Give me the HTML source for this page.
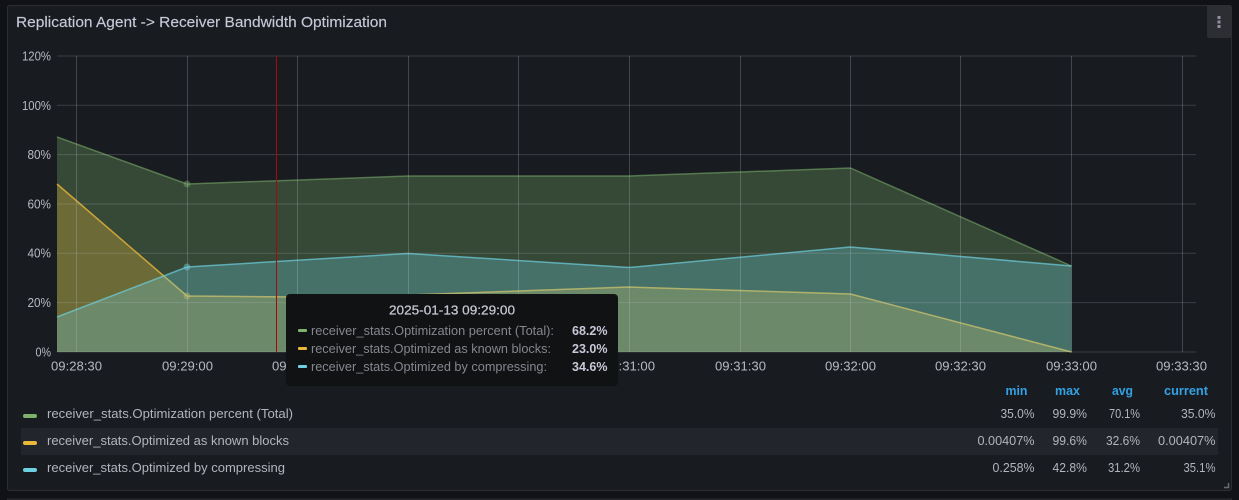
<!DOCTYPE html>
<html lang="en">
<head>
<meta charset="utf-8">
<title>Replication Agent -> Receiver Bandwidth Optimization</title>
<style>
html,body{margin:0;padding:0;width:1239px;height:500px;overflow:hidden;background:#111217}
svg{display:block;font-family:"Liberation Sans",sans-serif}
text{white-space:pre}
.ax{font-size:13px;fill:#b9b9c6}
.lg{font-size:13px;fill:#b4b4c1}
.hd{font-size:12.5px;fill:#33a2e5;font-weight:700}
.tt{font-size:13px;fill:#85878f}
.tv{font-size:12.5px;fill:#c8c8d8;font-weight:700}
</style>
</head>
<body>
<svg width="1239" height="500" viewBox="0 0 1239 500" xmlns="http://www.w3.org/2000/svg">
<rect x="7.5" y="5.5" width="1224" height="485" rx="2" fill="#181b1f" stroke="#2b2d32"/>
<rect x="7.5" y="499" width="1224" height="5" fill="#181b1f" stroke="#2b2d32"/>
<text x="16" y="27" font-size="15" fill="#c6c8d8" textLength="371" lengthAdjust="spacingAndGlyphs" stroke="#c6c8d8" stroke-width=".15">Replication Agent -&gt; Receiver Bandwidth Optimization</text>
<rect x="1207" y="5" width="24.500" height="33" rx="2" fill="#2c2e33"/>
<rect x="1217.500" y="16" width="3" height="3" fill="#8f909c"/>
<rect x="1217.500" y="20.500" width="3" height="3" fill="#8f909c"/>
<rect x="1217.500" y="25" width="3" height="3" fill="#8f909c"/>

<polygon points="57,137 187,184 408,176 629,176 850.500,168 1071.500,266 1071.500,352 57,352" fill="#7eb26d" fill-opacity=".3"/>
<polyline points="57,137 187,184 408,176 629,176 850.500,168 1071.500,266" fill="none" stroke="#7eb26d" stroke-opacity=".55" stroke-width="1.500" stroke-linejoin="round"/>
<circle cx="187" cy="184" r="3.500" fill="#7eb26d" fill-opacity=".4"/>
<polygon points="57,184 187,296 297,297 408,295 629,287 850.500,294 1071.500,352 57,352" fill="#eab839" fill-opacity=".3"/>
<polyline points="57,184 187,296 297,297 408,295 629,287 850.500,294 1071.500,352" fill="none" stroke="#eab839" stroke-opacity=".8" stroke-width="1.500" stroke-linejoin="round"/>
<circle cx="187" cy="296" r="3.500" fill="#eab839" fill-opacity=".4"/>
<polygon points="57,317 187,267 408,253.500 629,267.500 850.500,247 1071.500,266 1071.500,352 57,352" fill="#6ed0e0" fill-opacity=".3"/>
<polyline points="57,317 187,267 408,253.500 629,267.500 850.500,247 1071.500,266" fill="none" stroke="#6ed0e0" stroke-opacity=".7" stroke-width="1.500" stroke-linejoin="round"/>
<circle cx="187" cy="267" r="3.500" fill="#6ed0e0" fill-opacity=".45"/>

<g fill="none" stroke-width="1">
<path stroke="#ccccdc" stroke-opacity=".2" d="M57 56H1196M57 105.300H1196M57 154.600H1196M57 204H1196M57 253.300H1196M57 302.600H1196M57 352H1196"/>
<path stroke="#ccccdc" stroke-opacity=".24" d="M76.500 56V352M187.500 56V352M297.500 56V352M408.500 56V352M518.500 56V352M629.500 56V352M740.500 56V352M850.500 56V352M960.500 56V352M1071.500 56V352M1182.500 56V352"/>
</g>
<rect x="276" y="56" width="1" height="296" fill="#a90808"/>

<g lengthAdjust="spacingAndGlyphs">
<text class="ax" x="22" y="60.500" textLength="29" lengthAdjust="spacingAndGlyphs">120%</text>
<text class="ax" x="22" y="110" textLength="29" lengthAdjust="spacingAndGlyphs">100%</text>
<text class="ax" x="27.500" y="159" textLength="23.500" lengthAdjust="spacingAndGlyphs">80%</text>
<text class="ax" x="27.500" y="208.500" textLength="23.500" lengthAdjust="spacingAndGlyphs">60%</text>
<text class="ax" x="27.500" y="257.500" textLength="23.500" lengthAdjust="spacingAndGlyphs">40%</text>
<text class="ax" x="27.500" y="307" textLength="23.500" lengthAdjust="spacingAndGlyphs">20%</text>
<text class="ax" x="35.500" y="356.500" textLength="15.500" lengthAdjust="spacingAndGlyphs">0%</text>
<text class="ax" x="51" y="370.500" textLength="51" lengthAdjust="spacingAndGlyphs">09:28:30</text>
<text class="ax" x="162" y="370.500" textLength="51" lengthAdjust="spacingAndGlyphs">09:29:00</text>
<text class="ax" x="272" y="370.500" textLength="51" lengthAdjust="spacingAndGlyphs">09:29:30</text>
<text class="ax" x="383" y="370.500" textLength="51" lengthAdjust="spacingAndGlyphs">09:30:00</text>
<text class="ax" x="493" y="370.500" textLength="51" lengthAdjust="spacingAndGlyphs">09:30:30</text>
<text class="ax" x="604" y="370.500" textLength="51" lengthAdjust="spacingAndGlyphs">09:31:00</text>
<text class="ax" x="715" y="370.500" textLength="51" lengthAdjust="spacingAndGlyphs">09:31:30</text>
<text class="ax" x="825" y="370.500" textLength="51" lengthAdjust="spacingAndGlyphs">09:32:00</text>
<text class="ax" x="935" y="370.500" textLength="51" lengthAdjust="spacingAndGlyphs">09:32:30</text>
<text class="ax" x="1046" y="370.500" textLength="51" lengthAdjust="spacingAndGlyphs">09:33:00</text>
<text class="ax" x="1156" y="370.500" textLength="51" lengthAdjust="spacingAndGlyphs">09:33:30</text>
</g>

<rect x="286" y="294" width="332" height="92" rx="4" fill="#111214"/>
<text x="389" y="314.500" font-size="13" fill="#c4c6d2" stroke="#c4c6d2" stroke-width=".25" textLength="126" lengthAdjust="spacingAndGlyphs">2025-01-13 09:29:00</text>
<rect x="298" y="329" width="9" height="3" rx="1" fill="#7eb26d"/>
<rect x="298" y="347" width="9" height="3" rx="1" fill="#eab839"/>
<rect x="298" y="365" width="9" height="3" rx="1" fill="#6ed0e0"/>
<text class="tt" x="311" y="335" textLength="243" lengthAdjust="spacingAndGlyphs">receiver_stats.Optimization percent (Total):</text>
<text class="tt" x="311" y="353" textLength="240" lengthAdjust="spacingAndGlyphs">receiver_stats.Optimized as known blocks:</text>
<text class="tt" x="311" y="371" textLength="236" lengthAdjust="spacingAndGlyphs">receiver_stats.Optimized by compressing:</text>
<text class="tv" x="572" y="335" textLength="35.500" lengthAdjust="spacingAndGlyphs">68.2%</text>
<text class="tv" x="572" y="353" textLength="35.500" lengthAdjust="spacingAndGlyphs">23.0%</text>
<text class="tv" x="572" y="371" textLength="35.500" lengthAdjust="spacingAndGlyphs">34.6%</text>

<rect x="21" y="428" width="1197" height="27" fill="#22252b"/>
<rect x="23" y="414" width="14" height="4" rx="2" fill="#7eb26d"/>
<rect x="23" y="441" width="14" height="4" rx="2" fill="#eab839"/>
<rect x="23" y="468" width="14" height="4" rx="2" fill="#6ed0e0"/>
<text class="lg" x="47" y="418" textLength="246" lengthAdjust="spacingAndGlyphs">receiver_stats.Optimization percent (Total)</text>
<text class="lg" x="47" y="445" textLength="242" lengthAdjust="spacingAndGlyphs">receiver_stats.Optimized as known blocks</text>
<text class="lg" x="47" y="472" textLength="238" lengthAdjust="spacingAndGlyphs">receiver_stats.Optimized by compressing</text>

<text class="hd" x="1005.500" y="395" textLength="22" lengthAdjust="spacingAndGlyphs">min</text>
<text class="hd" x="1055" y="395" textLength="25" lengthAdjust="spacingAndGlyphs">max</text>
<text class="hd" x="1112" y="395" textLength="21" lengthAdjust="spacingAndGlyphs">avg</text>
<text class="hd" x="1164" y="395" textLength="44" lengthAdjust="spacingAndGlyphs">current</text>

<text class="lg" x="1000.500" y="418" textLength="34" lengthAdjust="spacingAndGlyphs">35.0%</text>
<text class="lg" x="1052.500" y="418" textLength="34.500" lengthAdjust="spacingAndGlyphs">99.9%</text>
<text class="lg" x="1109" y="418" textLength="31" lengthAdjust="spacingAndGlyphs">70.1%</text>
<text class="lg" x="1181" y="418" textLength="34.500" lengthAdjust="spacingAndGlyphs">35.0%</text>
<text class="lg" x="977.500" y="445" textLength="57" lengthAdjust="spacingAndGlyphs">0.00407%</text>
<text class="lg" x="1052.500" y="445" textLength="34.500" lengthAdjust="spacingAndGlyphs">99.6%</text>
<text class="lg" x="1106" y="445" textLength="34" lengthAdjust="spacingAndGlyphs">32.6%</text>
<text class="lg" x="1158" y="445" textLength="57.500" lengthAdjust="spacingAndGlyphs">0.00407%</text>
<text class="lg" x="992.500" y="472" textLength="42" lengthAdjust="spacingAndGlyphs">0.258%</text>
<text class="lg" x="1052.500" y="472" textLength="34.500" lengthAdjust="spacingAndGlyphs">42.8%</text>
<text class="lg" x="1108" y="472" textLength="32" lengthAdjust="spacingAndGlyphs">31.2%</text>
<text class="lg" x="1183.500" y="472" textLength="32" lengthAdjust="spacingAndGlyphs">35.1%</text>

<path d="M1228.500 483V487.500H1224" fill="none" stroke="#6a6c74" stroke-width="1.500"/>
</svg>
</body>
</html>
